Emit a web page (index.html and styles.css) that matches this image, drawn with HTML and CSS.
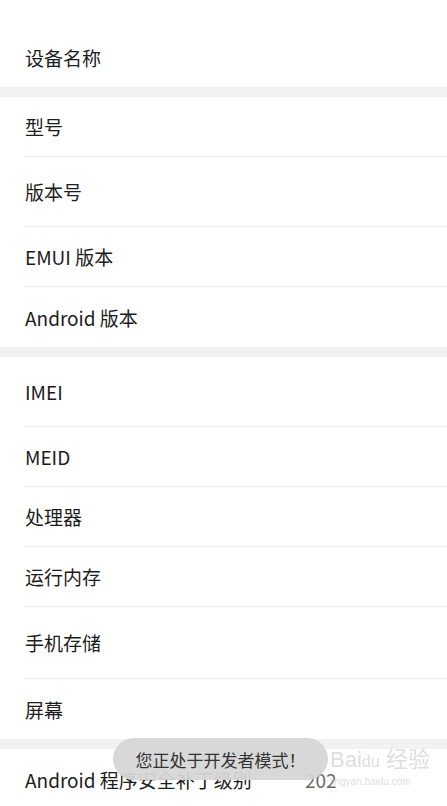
FILE: index.html
```html
<!DOCTYPE html>
<html lang="zh-CN">
<head>
<meta charset="UTF-8" />
<meta name="viewport" content="width=device-width, initial-scale=1" />
<title>关于手机</title>
<link rel="stylesheet" href="styles.css">
</head>
<body>

<div class="group first">
  <div class="row">设备名称</div>
</div>

<div class="group">
  <div class="row">型号</div>
  <div class="row tall">版本号</div>
  <div class="row">EMUI 版本</div>
  <div class="row last">Android 版本</div>
</div>

<div class="group">
  <div class="row tall">IMEI</div>
  <div class="row">MEID</div>
  <div class="row">处理器</div>
  <div class="row">运行内存</div>
  <div class="row taller">手机存储</div>
  <div class="row last">屏幕</div>
</div>

<div class="group">
  <div class="row last">
    <span class="label">Android 程序安全补丁级别</span>
    <span class="value">202</span>
  </div>
</div>

<div class="toast">您正处于开发者模式！</div>

<div class="watermark">
  <div class="wm-logo">Bai<span class="wm-du">du</span> 经验</div>
  <div class="wm-url">jingyan.baidu.com</div>
</div>

</body>
</html>
```

FILE: styles.css
```css
body {
  margin: 0;
  background: #fff;
  font-family: "Noto Sans CJK SC", "Noto Sans", sans-serif;
  color: #1c1c1c;
  overflow: hidden;
  height: 806px;
  position: relative;
}
.group {
  background: #fff;
  border-bottom: 10px solid #f2f2f2;
}
.group.first {
  padding-top: 27px;
}
.row {
  height: 60px;
  margin-left: 25px;
  display: flex;
  align-items: center;
  font-size: 19px;
  border-bottom: 1px solid #ebebeb;
  box-sizing: border-box;
}
.row.tall {
  height: 70px;
}
.row.taller {
  height: 72px;
}
.group.first .row,
.row.last {
  border-bottom: none;
}
.label {
  width: 280px;
}
.value {
  color: #666;
}
.toast {
  position: absolute;
  left: 113px;
  top: 738px;
  width: 215px;
  height: 42px;
  border-radius: 21px;
  background: rgba(214, 214, 214, 0.95);
  color: #333;
  font-size: 17px;
  display: flex;
  align-items: center;
  justify-content: center;
}
.watermark {
  position: absolute;
  left: 330px;
  top: 748px;
  color: rgba(200, 200, 200, 0.6);
  font-family: "Liberation Sans", sans-serif;
}
.wm-logo {
  font-size: 22px;
  line-height: 24px;
}
.wm-du {
  font-size: 16px;
}
.wm-url {
  font-size: 10px;
  margin-top: 2px;
}
```
